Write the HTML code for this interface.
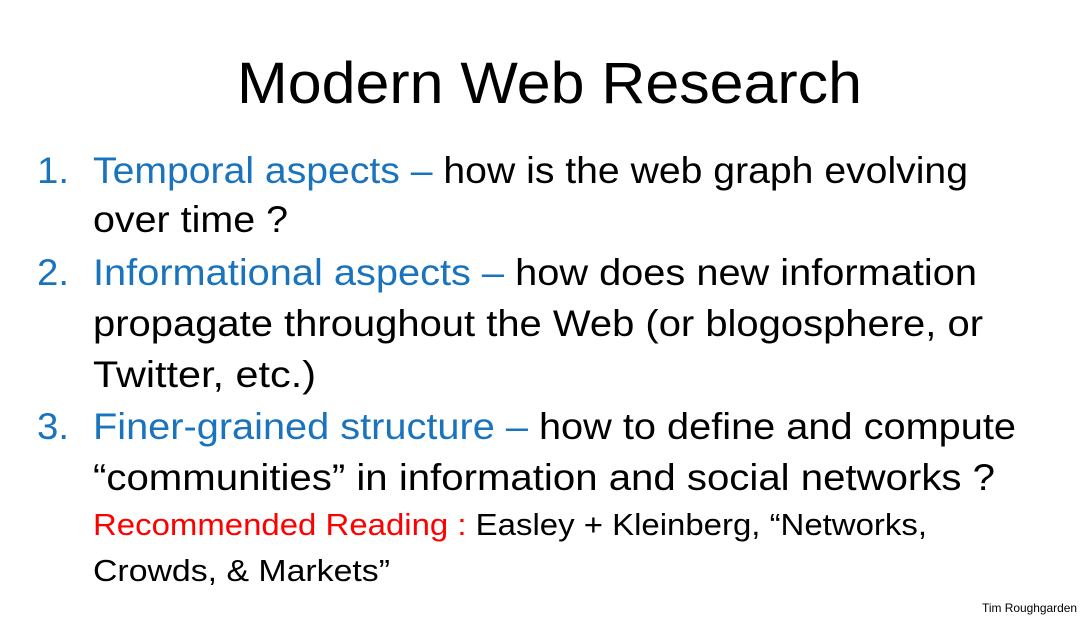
<!DOCTYPE html>
<html><head><meta charset="utf-8"><style>
html,body{margin:0;padding:0;background:#fff;width:1092px;height:618px;overflow:hidden}
svg{display:block}
text{font-family:"Liberation Sans",sans-serif}
</style></head><body>
<svg width="1092" height="618" viewBox="0 0 1092 618" xmlns="http://www.w3.org/2000/svg">
<text x="237" y="103" font-size="58" fill="#000" textLength="625" lengthAdjust="spacingAndGlyphs">Modern Web Research</text>

<g font-size="37">
<text x="37" y="183" fill="#1a73bd" textLength="32" lengthAdjust="spacingAndGlyphs">1.</text>
<text x="93" y="183" textLength="875" lengthAdjust="spacingAndGlyphs"><tspan fill="#1a73bd">Temporal aspects – </tspan><tspan fill="#000">how is the web graph evolving</tspan></text>
<text x="93" y="232" fill="#000" textLength="195" lengthAdjust="spacingAndGlyphs">over time ?</text>

<text x="37" y="285" fill="#1a73bd" textLength="32" lengthAdjust="spacingAndGlyphs">2.</text>
<text x="93" y="285" textLength="884" lengthAdjust="spacingAndGlyphs"><tspan fill="#1a73bd">Informational aspects – </tspan><tspan fill="#000">how does new information</tspan></text>
<text x="93" y="336" fill="#000" textLength="890" lengthAdjust="spacingAndGlyphs">propagate throughout the Web (or blogosphere, or</text>
<text x="93" y="387" fill="#000" textLength="223" lengthAdjust="spacingAndGlyphs">Twitter, etc.)</text>

<text x="37" y="439" fill="#1a73bd" textLength="32" lengthAdjust="spacingAndGlyphs">3.</text>
<text x="93" y="439" textLength="923" lengthAdjust="spacingAndGlyphs"><tspan fill="#1a73bd">Finer-grained structure – </tspan><tspan fill="#000">how to define and compute</tspan></text>
<text x="93" y="490" fill="#000" textLength="902" lengthAdjust="spacingAndGlyphs">“communities” in information and social networks ?</text>
</g>

<g font-size="31">
<text x="93" y="535" textLength="834" lengthAdjust="spacingAndGlyphs"><tspan fill="#ff0000">Recommended Reading : </tspan><tspan fill="#000">Easley + Kleinberg, “Networks,</tspan></text>
<text x="93" y="581" fill="#000" textLength="297" lengthAdjust="spacingAndGlyphs">Crowds, &amp; Markets”</text>
</g>

<text x="982" y="612" font-size="12" fill="#000" textLength="95" lengthAdjust="spacingAndGlyphs">Tim Roughgarden</text>
</svg>
</body></html>
